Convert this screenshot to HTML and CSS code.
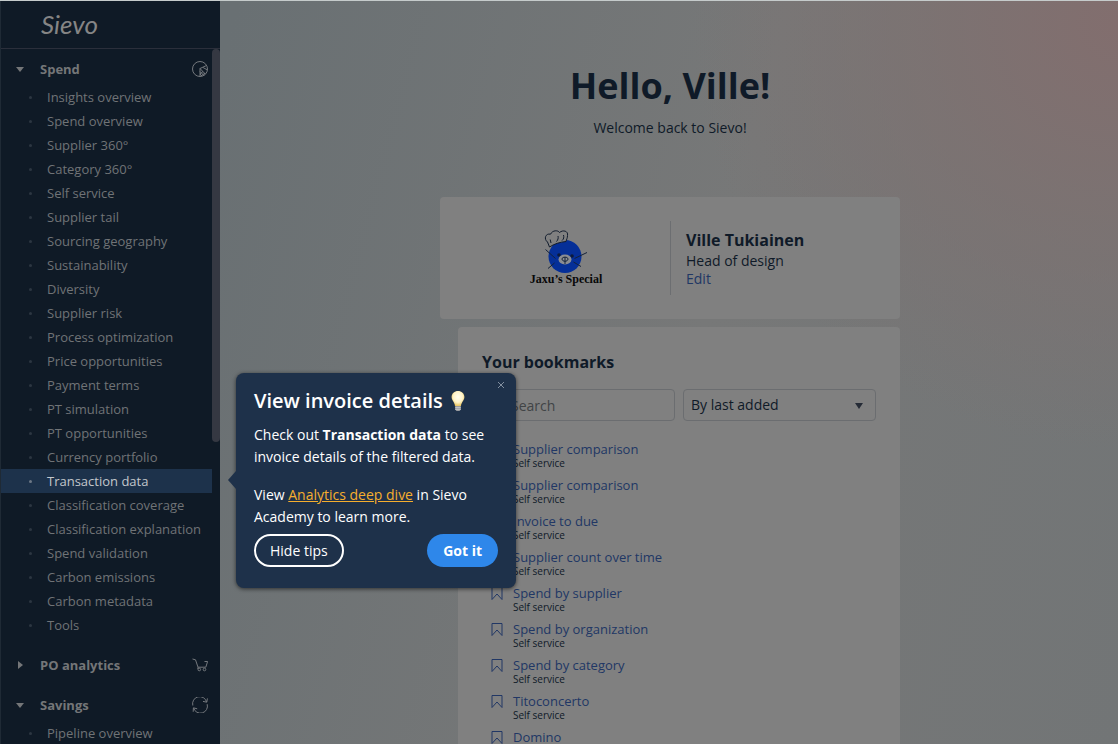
FILE: index.html
```
<!DOCTYPE html>
<html lang="en">
<head>
    <meta charset="UTF-8">
    <meta name="viewport" content="width=device-width, initial-scale=1.0">
    <title>Sievo</title>
    <link rel="stylesheet" href="styles.css">
</head>
<body>
    <div class="app">
        <aside class="sidebar">
            <div class="brand"><a href="#">Sievo</a></div>
            <div class="sidebar-body">
                <nav class="menu">
                    <section class="group">
                        <button class="group-header" type="button">
                            <span class="caret down"></span>
                            <span class="group-name">Spend</span>
                            <svg class="group-icon" viewBox="0 0 16 16">
                                <path d="M8 15.5A7.5 7.5 0 1 1 15.5 8A7.5 7.5 0 0 1 8 15.5Z"/>
                                <path d="M8 7.5V15.5M8 7.5L14.5 4.5M8 7.5L13.4 13.2M8 10.5L12 14.5M8 13L10 15M11 6.5L15.200 8.800M8 13L11 10.500M9 15L13 12"/>
                            </svg>
                        </button>
                        <ul>
                            <li><a href="#">Insights overview</a></li>
                            <li><a href="#">Spend overview</a></li>
                            <li><a href="#">Supplier 360°</a></li>
                            <li><a href="#">Category 360°</a></li>
                            <li><a href="#">Self service</a></li>
                            <li><a href="#">Supplier tail</a></li>
                            <li><a href="#">Sourcing geography</a></li>
                            <li><a href="#">Sustainability</a></li>
                            <li><a href="#">Diversity</a></li>
                            <li><a href="#">Supplier risk</a></li>
                            <li><a href="#">Process optimization</a></li>
                            <li><a href="#">Price opportunities</a></li>
                            <li><a href="#">Payment terms</a></li>
                            <li><a href="#">PT simulation</a></li>
                            <li><a href="#">PT opportunities</a></li>
                            <li><a href="#">Currency portfolio</a></li>
                            <li><a href="#" class="active">Transaction data</a></li>
                            <li><a href="#">Classification coverage</a></li>
                            <li><a href="#">Classification explanation</a></li>
                            <li><a href="#">Spend validation</a></li>
                            <li><a href="#">Carbon emissions</a></li>
                            <li><a href="#">Carbon metadata</a></li>
                            <li><a href="#">Tools</a></li>
                        </ul>
                    </section>
                    <section class="group">
                        <button class="group-header" type="button">
                            <span class="caret right"></span>
                            <span class="group-name">PO analytics</span>
                            <svg class="group-icon" viewBox="0 0 16 16">
                                <path d="M0.5 2L3.5 2.8L6 10.200H13.8L15.6 4.5H12.5M6 10.200L5.8 12"/>
                                <circle cx="7.3" cy="12.500" r="1.3"/>
                                <circle cx="12.500" cy="12.500" r="1.3"/>
                            </svg>
                        </button>
                    </section>
                    <section class="group">
                        <button class="group-header" type="button">
                            <span class="caret down"></span>
                            <span class="group-name">Savings</span>
                            <svg class="group-icon" viewBox="0 0 16 16">
                                <path d="M0.8 8.5A7 7 0 0 1 14.6 5M15.4 1.4L14.8 5.2L11 4.4"/>
                                <path d="M15.2 7.2A7 7 0 0 1 1.6 11M1.2 14.8L1.4 10.8L5.2 11.8"/>
                            </svg>
                        </button>
                        <ul>
                            <li><a href="#">Pipeline overview</a></li>
                        </ul>
                    </section>
                </nav>
                <div class="scroll-track"><div class="scroll-thumb"></div></div>
            </div>
        </aside>

        <main class="main">
            <header class="welcome">
                <h1>Hello, Ville!</h1>
                <p>Welcome back to Sievo!</p>
            </header>

            <div class="content">
                <section class="card profile">
                    <div class="company">
                        <svg class="company-logo" viewBox="0 0 44 43">
                            <circle class="face" cx="21" cy="26.500" r="16.5"/>
                            <path class="hat" d="M5.500 17L3.500 12C-0.500 9 1.500 3 6.500 4.200C8.500 0 14 0 15.500 2.500C19 -0.500 24.500 1 23.500 5.500C23.500 8 22.500 9.500 22 11.500C16 12 10 14 5.500 17ZM7 13L6.200 9.500M12.500 11.500C14 10 14.500 8 14 6M18 10.500C20 9 20 7 19.500 5"/>
                            <path class="whisker" d="M1.500 19.500L11.500 28.500M4 38.500L10.500 33M30.500 28.500L43 22.500M29.500 32L37 36.500"/>
                            <circle class="eye" cx="15" cy="25" r="1.800"/>
                            <circle class="eye" cx="28" cy="26" r="1.800"/>
                            <ellipse class="muzzle" cx="21" cy="29.500" rx="6.500" ry="5"/>
                            <path class="nose" d="M18 29C18 26.500 24 26.500 24 29C24 32 18 32 18 29ZM21 27V34"/>
                        </svg>
                        <span class="company-name">Jaxu’s Special</span>
                    </div>
                    <div class="person">
                        <h2>Ville Tukiainen</h2>
                        <p>Head of design</p>
                        <a href="#">Edit</a>
                    </div>
                </section>

                <section class="card bookmarks">
                    <h2>Your bookmarks</h2>
                    <div class="filters">
                        <input type="text" placeholder="Search" aria-label="Search bookmarks">
                        <div class="select">
                            <select aria-label="Sort bookmarks">
                                <option>By last added</option>
                                <option>By name</option>
                            </select>
                            <span class="caret down"></span>
                        </div>
                    </div>
                    <ul class="bookmark-list" id="bookmarkList"></ul>
                </section>
            </div>
        </main>

        <div class="tip" role="dialog" aria-labelledby="tipTitle">
            <button class="tip-close" type="button" aria-label="Close">
                <svg viewBox="0 0 8 8"><path d="M1 1L7 7M7 1L1 7"/></svg>
            </button>
            <h2 id="tipTitle">View invoice details
                <svg class="bulb" viewBox="0 0 14 22">
                    <defs>
                        <radialGradient id="glow" cx="50%" cy="40%" r="60%">
                            <stop offset="0" stop-color="#fffef2"/>
                            <stop offset="0.600" stop-color="#fff3c8"/>
                            <stop offset="1" stop-color="#e9c35c"/>
                        </radialGradient>
                    </defs>
                    <path d="M7 1C3.400 1 0.600 3.600 0.600 7C0.600 10.500 3.600 12 4 16H10C10.400 12 13.400 10.500 13.400 7C13.400 3.600 10.600 1 7 1Z" fill="url(#glow)"/>
                    <path d="M4.200 16H9.800V19.500L8.500 21H5.500L4.200 19.500Z" fill="#9a9ca0"/>
                    <path d="M4.200 17.600H9.800M4.200 19.300H9.800" stroke="#d5d6d8" stroke-width="0.700"/>
                </svg>
            </h2>
            <p>Check out <strong>Transaction data</strong> to see invoice details of the filtered data.</p>
            <p>View <a href="#">Analytics deep dive</a> in Sievo Academy to learn more.</p>
            <div class="tip-actions">
                <button class="btn btn-outline" type="button">Hide tips</button>
                <button class="btn btn-primary" type="button">Got it</button>
            </div>
        </div>
    </div>

    <script>
        const bookmarks = [
            'Supplier comparison',
            'Supplier comparison',
            'Invoice to due',
            'Supplier count over time',
            'Spend by supplier',
            'Spend by organization',
            'Spend by category',
            'Titoconcerto',
            'Domino'
        ];

        document.getElementById('bookmarkList').innerHTML = bookmarks.map(name => `
            <li>
                <svg viewBox="0 0 12 14"><path d="M1 0.500H11V12.500L6 7L1 12.500Z"/></svg>
                <div>
                    <a href="#">${name}</a>
                    <small>Self service</small>
                </div>
            </li>`).join('');
    </script>
</body>
</html>
```

FILE: styles.css
```
* {
    box-sizing: border-box;
}
body {
    font-family: 'Open Sans', 'Noto Sans', sans-serif;
    font-size: 14px;
    margin: 0;
    color: #0f1a28;
    overflow: hidden;
}
h1, h2, p, ul {
    margin: 0;
    padding: 0;
}
ul {
    list-style: none;
}
a {
    color: #213765;
    text-decoration: none;
}
button, input, select {
    font-family: inherit;
    cursor: pointer;
}
.app {
    position: relative;
    display: flex;
    height: 100vh;
    border-top: 1px solid #c5cbcb;
    background:
        radial-gradient(circle at 100% 3%, #826e6e 0%, rgba(126, 113, 112, 0.7) 15%, rgba(122, 118, 117, 0) 32%),
        linear-gradient(105deg, #697073 18%, #777878 60%, #727576 100%);
}

/* sidebar */
.sidebar {
    display: flex;
    flex-direction: column;
    flex: 0 0 220px;
    background: #0f1a26;
    border-left: 1px solid #1f2a35;
}
.brand {
    flex: none;
    height: 48px;
    padding-left: 40px;
    border-bottom: 1px solid #2b2f3b;
}
.brand a {
    color: #858585;
    font-family: Lato, sans-serif;
    font-size: 26px;
    font-style: italic;
    line-height: 46px;
}
.sidebar-body {
    display: flex;
    flex: 1;
    min-height: 0;
}
.menu {
    flex: 1;
    padding-top: 4px;
    overflow: hidden;
}
.scroll-track {
    flex: 0 0 8px;
}
.scroll-thumb {
    height: 56.5%;
    background: #353842;
    border-radius: 4px;
}
.group {
    margin-bottom: 8px;
}
.group ul {
    padding-bottom: 4px;
}
.group-header {
    display: flex;
    align-items: center;
    width: 100%;
    height: 32px;
    padding: 0 4px 0 15px;
    background: none;
    border: none;
    color: #747678;
    font-size: 13px;
    font-weight: 700;
    text-align: left;
}
.group-name {
    flex: 1;
    padding-left: 16px;
}
.group-icon {
    width: 16px;
    height: 16px;
    fill: none;
    stroke: #74787d;
    stroke-width: 1;
}
.caret {
    width: 8px;
    border: 4px solid transparent;
}
.caret.down {
    border-top: 5px solid;
    border-bottom: none;
}
.caret.right {
    margin-left: 2px;
    margin-right: -2px;
    border-left: 5px solid;
    border-right: none;
}
.menu li a {
    display: flex;
    align-items: center;
    height: 24px;
    padding-left: 28px;
    color: #707376;
    font-size: 13px;
    white-space: nowrap;
}
.menu li a::before {
    content: '';
    width: 3px;
    height: 3px;
    margin-right: 15px;
    border-radius: 50%;
    background: #2c3641;
}
.menu li a.active {
    background: #1d324b;
    color: #c3c7cc;
}
.menu li a.active::before {
    background: #6d7886;
}

/* start page */
.main {
    flex: 1;
    min-width: 0;
    padding-left: 2px;
    overflow: hidden;
}
.welcome {
    padding: 61px 0 57px;
    text-align: center;
}
.welcome h1 {
    font-size: 36px;
    line-height: 48px;
}
.welcome p {
    margin-top: 6px;
    line-height: 24px;
}
.content {
    max-width: 460px;
    margin: 0 auto;
}
.card {
    background: #808080;
    border-radius: 4px;
}
.card h2 {
    font-size: 16px;
    line-height: 24px;
}
.profile {
    display: grid;
    grid-template-columns: 1fr 1fr;
    padding: 24px 0;
    height: 122px;
}
.company {
    display: flex;
    flex-direction: column;
    align-items: center;
    padding: 9px 0 0 22px;
}
.company-logo {
    width: 44px;
    height: 43px;
}
.face {
    fill: #052f98;
}
.hat {
    fill: #808080;
    stroke: #101b2c;
    stroke-width: 1;
}
.whisker, .nose {
    fill: none;
    stroke: #14223a;
    stroke-width: 1;
}
.eye {
    fill: #0b1a3c;
}
.muzzle {
    fill: #8b8d92;
}
.company-name {
    color: #080808;
    font-family: 'Liberation Serif', serif;
    font-size: 12px;
    font-weight: 700;
    line-height: 12px;
}
.person {
    padding: 7px 0 0 15px;
    border-left: 1px solid #6c6e71;
}
.person p, .person a {
    display: block;
    line-height: 18px;
}
.bookmarks {
    min-height: 440px;
    margin: 8px 0 0 18px;
    padding: 23px 24px;
}
.filters {
    display: grid;
    grid-template-columns: 1fr 1fr;
    gap: 8px;
    margin: 15px 0 16px;
}
.filters input, .filters select {
    width: 100%;
    height: 32px;
    padding: 0 8px;
    background: transparent;
    border: 1px solid #6b6d70;
    border-radius: 4px;
    color: #0f1a28;
    font-size: 14px;
}
.filters input {
    padding-left: 28px;
}
.filters input::placeholder {
    color: #414446;
}
.select {
    position: relative;
}
.filters select {
    padding: 0 7px 2px;
    appearance: none;
}
.select .caret {
    position: absolute;
    right: 13px;
    top: 14px;
    color: #252b36;
    pointer-events: none;
}
.select .caret.down {
    border-top-width: 6px;
}
.bookmark-list li {
    display: flex;
    gap: 10px;
    height: 36px;
    padding: 4px 0 0 9px;
}
.bookmark-list svg {
    width: 12px;
    height: 14px;
    margin-top: 2px;
    fill: none;
    stroke: #213765;
}
.bookmark-list a {
    display: block;
    font-size: 13px;
    line-height: 16px;
}
.bookmark-list small {
    display: block;
    font-size: 10px;
    line-height: 12px;
}

/* guide tip next to the active menu item */
.tip {
    position: absolute;
    left: 236px;
    top: 372px;
    width: 280px;
    padding: 16px 18px 21px;
    background: #1e314a;
    border-radius: 8px;
    box-shadow: 0 1px 4px rgba(0, 0, 0, 0.6);
    color: #ffffff;
}
.tip::before {
    content: '';
    position: absolute;
    left: -8px;
    top: 98px;
    border: 9px solid transparent;
    border-left: none;
    border-right: 8px solid #1e314a;
}
.tip h2 {
    display: flex;
    align-items: center;
    gap: 8px;
    margin-bottom: 11px;
    font-size: 20px;
    font-weight: 600;
    line-height: 24px;
}
.bulb {
    width: 14px;
    height: 22px;
}
.tip p {
    margin-bottom: 16px;
    line-height: 22px;
}
.tip p a {
    color: #f5ae2e;
    text-decoration: underline;
}
.tip-close {
    position: absolute;
    right: 11px;
    top: 8px;
    padding: 0;
    width: 8px;
    height: 8px;
    background: none;
    border: none;
}
.tip-close svg {
    display: block;
    stroke: #8390a0;
}
.tip-actions {
    display: flex;
    justify-content: space-between;
    margin-top: -10px;
}
.btn {
    height: 33px;
    padding: 0 16px;
    border: none;
    border-radius: 17px;
    color: #ffffff;
    font-size: 14px;
}
.btn-outline {
    padding: 0 14px;
    background: none;
    border: 2px solid #ffffff;
}
.btn-primary {
    background: #2e87ea;
    font-weight: 700;
}
```
